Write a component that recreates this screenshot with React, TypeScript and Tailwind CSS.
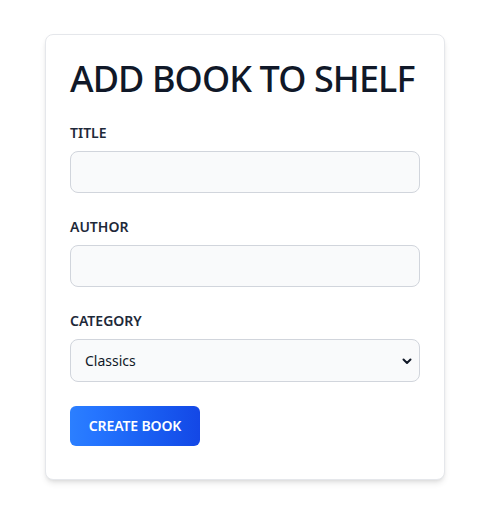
import React from "react";

export default function App() {
    return (
        <div className="min-h-screen bg-white pl-[5px] pt-[34px] font-['Noto_Sans',sans-serif]">
            <div className="mx-auto w-[400px] rounded-lg border border-gray-200 bg-white p-6 pb-[33px] shadow-md">
                <h1 className="mb-6 whitespace-nowrap text-4xl font-medium tracking-[-0.025em] text-gray-900">ADD BOOK TO SHELF</h1>

                <form className="space-y-6" onSubmit={(e) => e.preventDefault()}>
                    <div>
                        <label className="mb-2 block text-sm font-semibold text-gray-800">TITLE</label>
                        <input
                            type="text"
                            className="block h-[42px] w-full rounded-lg border border-gray-300 bg-gray-50 px-3.5 text-sm text-gray-900 outline-none"
                        />
                    </div>

                    <div>
                        <label className="mb-2 block text-sm font-semibold text-gray-800">AUTHOR</label>
                        <input
                            type="text"
                            className="block h-[42px] w-full rounded-lg border border-gray-300 bg-gray-50 px-3.5 text-sm text-gray-900 outline-none"
                        />
                    </div>

                    <div>
                        <label className="mb-2 block text-sm font-semibold text-gray-800">CATEGORY</label>
                        <div className="relative">
                            <select className="block h-[43px] w-full appearance-none rounded-lg border border-gray-300 bg-gray-50 px-3.5 text-sm text-gray-900 outline-none">
                                <option>Classics</option>
                                <option>Fantasy</option>
                                <option>Mystery</option>
                            </select>
                            <svg
                                className="pointer-events-none absolute right-[7px] top-1/2 -translate-y-1/2"
                                width="12"
                                height="12"
                                viewBox="0 0 12 12"
                            >
                                <path d="M2.5 4.5 L6 8 L9.5 4.5" fill="none" stroke="#111827" strokeWidth="2" strokeLinecap="round" strokeLinejoin="round" />
                            </svg>
                        </div>
                    </div>

                    <button
                        type="submit"
                        className="h-10 w-[130px] rounded-md bg-gradient-to-r from-blue-500 to-blue-700 text-sm font-semibold tracking-[-0.01em] text-white"
                    >
                        CREATE BOOK
                    </button>
                </form>
            </div>
        </div>
    );
}
